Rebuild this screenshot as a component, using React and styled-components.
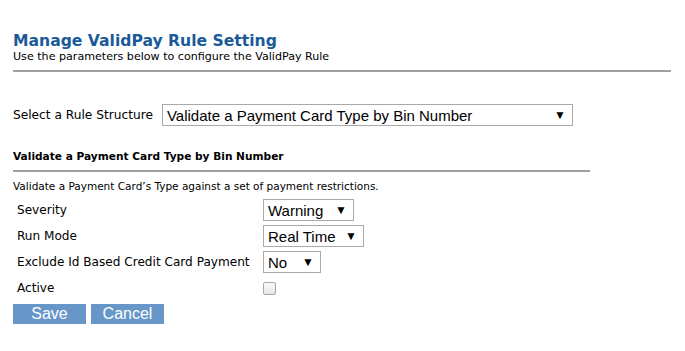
import React from "react";
import styled, { createGlobalStyle } from "styled-components";

const Global = createGlobalStyle`
  body {
    margin: 0;
    background: #fff;
    font-family: "DejaVu Sans", Verdana, sans-serif;
    color: #000;
  }
`;

const Page = styled.div`
  padding: 32px 14px 0 13px;
  width: 658px;
`;

const Title = styled.h1`
  margin: 0;
  font-size: 15.6px;
  font-weight: bold;
  color: #1b5a98;
  line-height: 18px;
`;

const Subtitle = styled.div`
  font-size: 11.1px;
  line-height: 13px;
`;

const Rule = styled.div`
  height: 2px;
  background: #a0a0a0;
  margin-top: ${(p) => p.top || 7}px;
  width: ${(p) => p.width || "100%"};
`;

const StructureRow = styled.div`
  display: flex;
  align-items: center;
  gap: 9px;
  margin-top: 32px;
`;

const Label = styled.span`
  font-size: 12.2px;
`;

const SelectBox = styled.div`
  display: flex;
  align-items: center;
  justify-content: space-between;
  box-sizing: border-box;
  width: ${(p) => p.width}px;
  height: ${(p) => p.height || 22}px;
  border: 1px solid #a9a9a9;
  padding: 0 6px 0 4px;
  font-family: "Liberation Sans", Arial, sans-serif;
  font-size: 15px;
  background: #fff;
`;

const Arrow = styled.span`
  font-size: 12px;
  margin-left: 8px;
`;

const SectionTitle = styled.div`
  margin-top: 24px;
  font-size: 10.6px;
  font-weight: bold;
`;

const Description = styled.div`
  margin-top: 8px;
  font-size: 10.5px;
`;

const Form = styled.div`
  display: grid;
  grid-template-columns: 246px auto;
  grid-auto-rows: 26px;
  align-items: center;
  padding-left: 4px;
  margin-top: 5px;
`;

const FieldLabel = styled.span`
  font-size: 12.1px;
`;

const Cell = styled.div`
  display: flex;
  align-items: center;
`;

const Check = styled.div`
  width: 11px;
  height: 11px;
  border: 1px solid #a8a8a8;
  border-radius: 2px;
  background: linear-gradient(#fafafa, #e6e6e6);
`;

const Buttons = styled.div`
  display: flex;
  gap: 5px;
  margin-top: 3px;
`;

const Button = styled.button`
  width: 73px;
  height: 20px;
  border: none;
  padding: 0;
  background: #6797c8;
  color: #fff;
  font-family: "Liberation Sans", Arial, sans-serif;
  font-size: 16px;
  line-height: 20px;
`;

function Select({ value, width, height }) {
  return (
    <SelectBox width={width} height={height}>
      <span>{value}</span>
      <Arrow>▼</Arrow>
    </SelectBox>
  );
}

export default function App() {
  return (
    <>
      <Global />
      <Page>
        <Title>Manage ValidPay Rule Setting</Title>
        <Subtitle>Use the parameters below to configure the ValidPay Rule</Subtitle>
        <Rule top={7} />
        <StructureRow>
          <Label>Select a Rule Structure</Label>
          <Select value="Validate a Payment Card Type by Bin Number" width={411} height={22} />
        </StructureRow>
        <SectionTitle>Validate a Payment Card Type by Bin Number</SectionTitle>
        <Rule top={8} width="577px" />
        <Description>Validate a Payment Card’s Type against a set of payment restrictions.</Description>
        <Form>
          <FieldLabel>Severity</FieldLabel>
          <Cell>
            <Select value="Warning" width={91} />
          </Cell>
          <FieldLabel>Run Mode</FieldLabel>
          <Cell>
            <Select value="Real Time" width={101} />
          </Cell>
          <FieldLabel>Exclude Id Based Credit Card Payment</FieldLabel>
          <Cell>
            <Select value="No" width={58} />
          </Cell>
          <FieldLabel>Active</FieldLabel>
          <Cell>
            <Check />
          </Cell>
        </Form>
        <Buttons>
          <Button>Save</Button>
          <Button>Cancel</Button>
        </Buttons>
      </Page>
    </>
  );
}
